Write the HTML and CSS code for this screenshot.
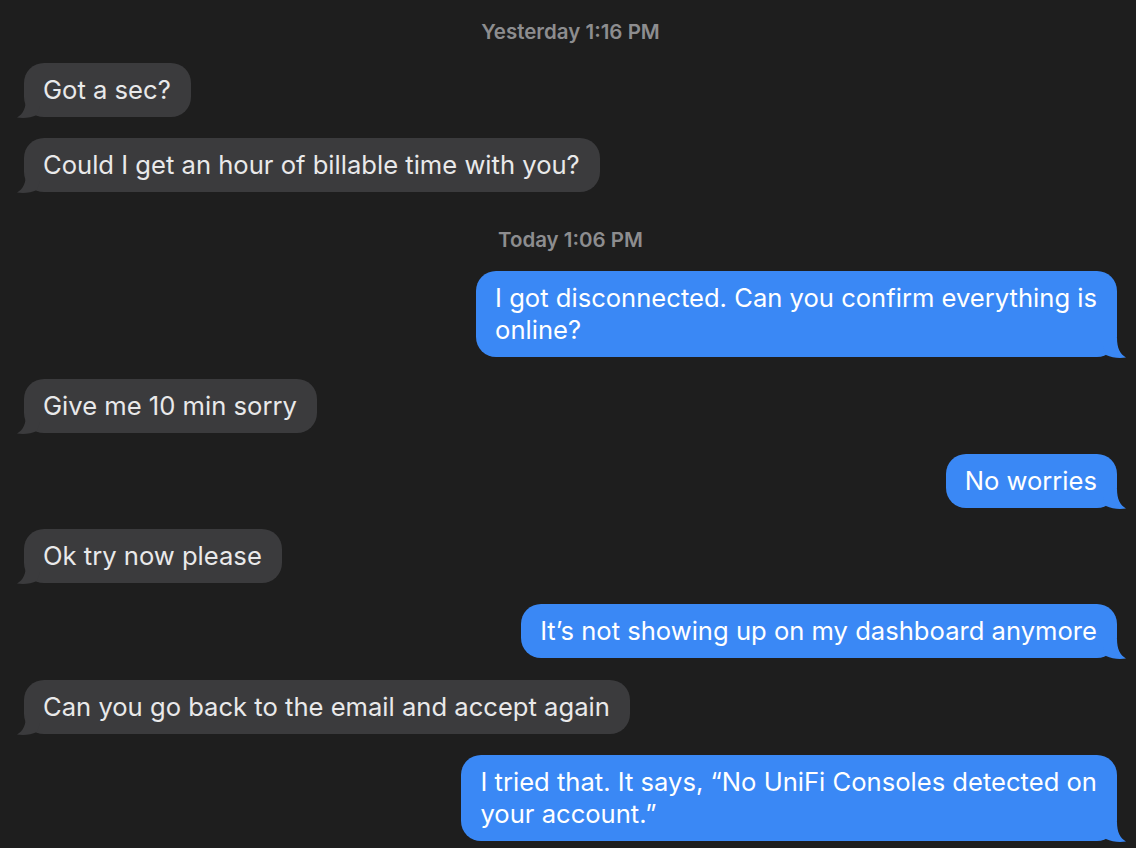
FILE: index.html
```html
<!DOCTYPE html>
<html>
<head>
<meta charset="utf-8">
<link rel="stylesheet" href="styles.css">
</head>
<body>
<div class="chat">
  <div class="stamp">Yesterday 1:16 PM</div>
  <div class="row in"><div class="bubble">Got a sec?<svg class="tail" viewBox="0 0 24 24"><path d="M14,4 C14,14 17,20 23,23.5 C17,24.5 9,24 3,21 L0,12 L0,4 Z"/></svg></div></div>
  <div class="row in"><div class="bubble">Could I get an hour of billable time with you?<svg class="tail" viewBox="0 0 24 24"><path d="M14,4 C14,14 17,20 23,23.5 C17,24.5 9,24 3,21 L0,12 L0,4 Z"/></svg></div></div>
  <div class="stamp">Today 1:06 PM</div>
  <div class="row out"><div class="bubble">I got disconnected. Can you confirm everything is<br>online?<svg class="tail" viewBox="0 0 24 24"><path d="M14,4 C14,14 17,20 23,23.5 C17,24.5 9,24 3,21 L0,12 L0,4 Z"/></svg></div></div>
  <div class="row in"><div class="bubble">Give me 10 min sorry<svg class="tail" viewBox="0 0 24 24"><path d="M14,4 C14,14 17,20 23,23.5 C17,24.5 9,24 3,21 L0,12 L0,4 Z"/></svg></div></div>
  <div class="row out"><div class="bubble">No worries<svg class="tail" viewBox="0 0 24 24"><path d="M14,4 C14,14 17,20 23,23.5 C17,24.5 9,24 3,21 L0,12 L0,4 Z"/></svg></div></div>
  <div class="row in"><div class="bubble">Ok try now please<svg class="tail" viewBox="0 0 24 24"><path d="M14,4 C14,14 17,20 23,23.5 C17,24.5 9,24 3,21 L0,12 L0,4 Z"/></svg></div></div>
  <div class="row out"><div class="bubble">It’s not showing up on my dashboard anymore<svg class="tail" viewBox="0 0 24 24"><path d="M14,4 C14,14 17,20 23,23.5 C17,24.5 9,24 3,21 L0,12 L0,4 Z"/></svg></div></div>
  <div class="row in"><div class="bubble">Can you go back to the email and accept again<svg class="tail" viewBox="0 0 24 24"><path d="M14,4 C14,14 17,20 23,23.5 C17,24.5 9,24 3,21 L0,12 L0,4 Z"/></svg></div></div>
  <div class="row out"><div class="bubble">I tried that. It says, “No UniFi Consoles detected on<br>your account.”<svg class="tail" viewBox="0 0 24 24"><path d="M14,4 C14,14 17,20 23,23.5 C17,24.5 9,24 3,21 L0,12 L0,4 Z"/></svg></div></div>
</div>
</body>
</html>
```
FILE: styles.css
```css
html, body {
  margin: 0;
  padding: 0;
  background: #1e1e1e;
  height: 100%;
  overflow: hidden;
}
body {
  font-family: Inter, "Noto Sans", sans-serif;
}
.chat {
  display: flex;
  flex-direction: column;
  gap: 21px;
  padding: 5px 19px 0 24px;
}
.stamp {
  padding-top: 17px;
  height: 20px;
  line-height: 20px;
  text-align: center;
  font-size: 20.5px;
  font-weight: 600;
  color: #8d8d8f;
}
.stamp + .row {
  margin-top: 0;
}
.row {
  display: flex;
}
.row.in { justify-content: flex-start; }
.row.out { justify-content: flex-end; }
.row + .row {
  margin-top: 0.3px;
}
.bubble {
  position: relative;
  max-width: 623px;
  padding: 11px 20px 11px 19px;
  border-radius: 20px;
  font-size: 25.6px;
  line-height: 32px;
}
.in .bubble {
  background: #3b3b3d;
  color: #e9e9ea;
}
.out .bubble {
  background: #3a88f5;
  color: #ffffff;
}
.tail {
  position: absolute;
  width: 24px;
  height: 24px;
  bottom: -1px;
}
.out .tail {
  right: -10px;
  fill: #3a88f5;
}
.in .tail {
  left: -8px;
  fill: #3b3b3d;
  transform: scaleX(-1);
}
```
